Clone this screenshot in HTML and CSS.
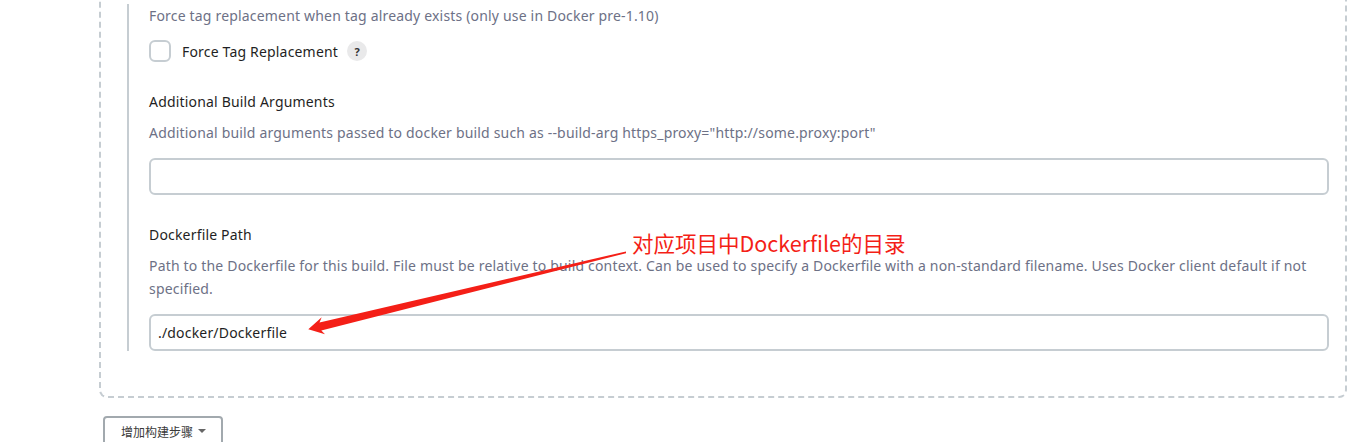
FILE: index.html
```html
<!DOCTYPE html>
<html lang="zh">
<head>
<meta charset="utf-8">
<title>Docker build step</title>
<link rel="stylesheet" href="styles.css">
</head>
<body>
<div class="page">
  <div class="step-box">
    <div class="step-inner">
      <div class="desc">Force tag replacement when tag already exists (only use in Docker pre-1.10)</div>
      <div class="check-row">
        <span class="checkbox"></span>
        <span class="check-label">Force Tag Replacement</span>
        <span class="help">?</span>
      </div>

      <div class="field">
        <div class="label">Additional Build Arguments</div>
        <div class="desc">Additional build arguments passed to docker build such as --build-arg https_proxy="http://some.proxy:port"</div>
        <div class="input"></div>
      </div>

      <div class="field">
        <div class="label">Dockerfile Path</div>
        <div class="desc">Path to the Dockerfile for this build. File must be relative to build context. Can be used to specify a Dockerfile with a non-standard filename. Uses Docker client default if not specified.</div>
        <div class="input">./docker/Dockerfile</div>
      </div>
    </div>
  </div>

  <button class="add-step">增加构建步骤<span class="caret"></span></button>

  <div class="note">对应项目中Dockerfile的目录</div>
  <svg class="arrow" width="1351" height="442" viewBox="0 0 1351 442">
    <polygon fill="#f41f17" points="626,251.4 319.5,322.6 321.7,317.3 308.3,329.3 325,334.3 321.3,330.4 626,253.2"/>
  </svg>
</div>
</body>
</html>
```

FILE: styles.css
```css
html, body {
  margin: 0;
  padding: 0;
  background: #fff;
  overflow: hidden;
}
body {
  font-family: "Noto Sans", "Noto Sans CJK SC", sans-serif;
  font-size: 14px;
  letter-spacing: 0.18px;
  color: #1f1f24;
}
.page {
  position: relative;
  width: 1351px;
  height: 442px;
  overflow: hidden;
}
.step-box {
  margin: -10px 0 0 99px;
  width: 1248px;
  box-sizing: border-box;
  border: 2px dashed #c6cdd2;
  border-radius: 8px;
  padding: 12px 16px 45px 26px;
}
.step-inner {
  border-left: 2px solid #c6cdd2;
  padding-left: 20px;
}
.desc {
  color: #6d7186;
  line-height: 23px;
}
.check-row {
  display: flex;
  align-items: center;
  height: 22px;
  margin-top: 13px;
}
.checkbox {
  width: 18px;
  height: 18px;
  border: 2px solid #c6cdd2;
  border-radius: 6px;
  flex: none;
}
.check-label {
  margin-left: 11px;
  color: #1f1f24;
}
.help {
  margin-left: 9px;
  width: 20px;
  height: 20px;
  border-radius: 50%;
  background: #e9e9ea;
  color: #333;
  font-size: 11px;
  font-weight: 700;
  letter-spacing: 0;
  display: flex;
  align-items: center;
  justify-content: center;
}
.field {
  margin-top: 28px;
}
.label {
  line-height: 23px;
  color: #1f1f24;
  margin-bottom: 8px;
}
.field .desc {
  margin-bottom: 14px;
}
.input {
  height: 37px;
  box-sizing: border-box;
  border: 2px solid #c6cdd2;
  border-radius: 6px;
  padding: 0 7px;
  line-height: 33px;
  color: #1f1f24;
}
.add-step {
  display: flex;
  align-items: center;
  margin: 18px 0 0 103px;
  width: 120px;
  height: 32px;
  box-sizing: border-box;
  border: 2px solid #a2a9ae;
  border-radius: 4px;
  background: #fff;
  font-family: "Noto Sans CJK SC", sans-serif;
  font-size: 12px;
  letter-spacing: 0;
  color: #3a3a3a;
  padding: 0 0 2px 16px;
}
.caret {
  margin-left: 5px;
  width: 0;
  height: 0;
  border-left: 4px solid transparent;
  border-right: 4px solid transparent;
  border-top: 4px solid #666;
}
.note {
  position: absolute;
  left: 632px;
  top: 233px;
  font-family: "Noto Sans CJK SC", sans-serif;
  font-size: 21.5px;
  letter-spacing: 0;
  line-height: 20px;
  color: #f41f17;
}
.arrow {
  position: absolute;
  left: 0;
  top: 0;
  pointer-events: none;
}
```
